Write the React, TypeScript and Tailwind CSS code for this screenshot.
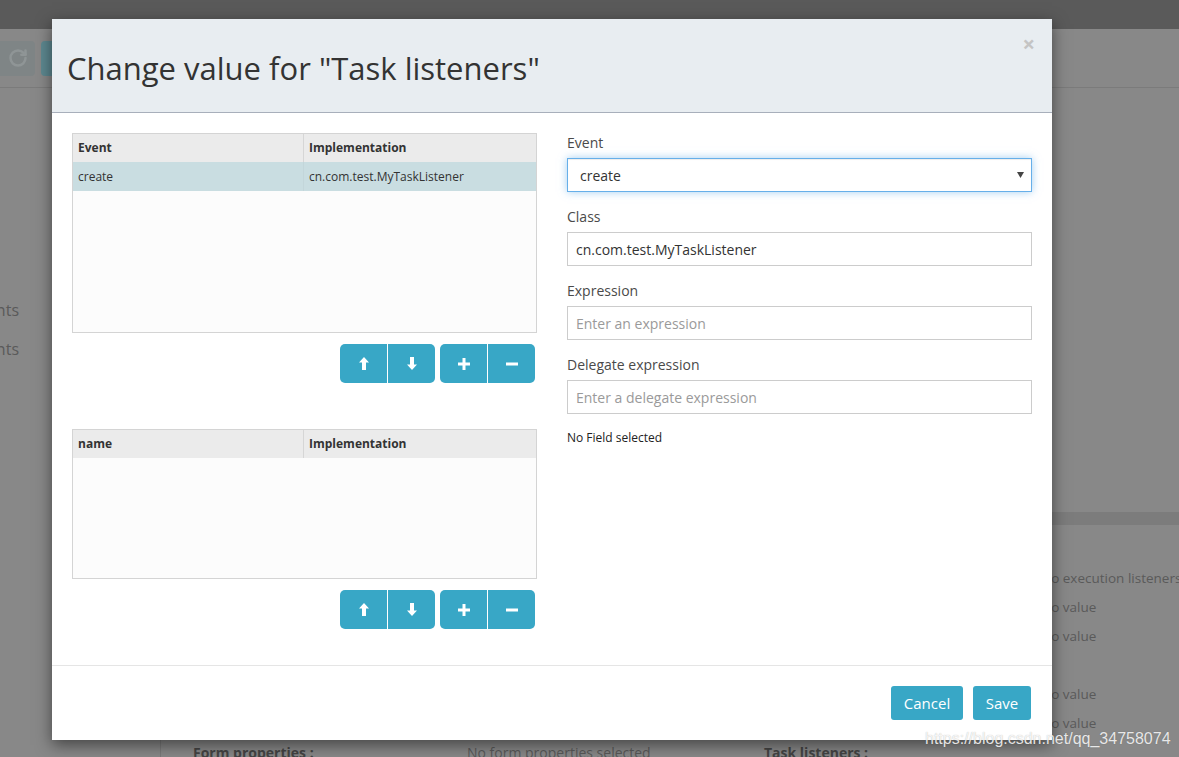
import { RotateCw } from "lucide-react";

function ArrowIcon({ dir }: { dir: "up" | "down" }) {
  return (
    <svg width="10" height="13" viewBox="0 0 10 13" className={dir === "down" ? "rotate-180" : ""}>
      <path d="M5 0 L10 5.5 H7 V13 H3 V5.5 H0 Z" fill="white" />
    </svg>
  );
}

function PlusIcon() {
  return (
    <svg width="12" height="12" viewBox="0 0 12 12">
      <path d="M4.5 0 H7.5 V4.5 H12 V7.5 H7.5 V12 H4.5 V7.5 H0 V4.5 H4.5 Z" fill="white" />
    </svg>
  );
}

function MinusIcon() {
  return (
    <svg width="12" height="4" viewBox="0 0 12 4">
      <rect x="0" y="0.5" width="12" height="3" fill="white" />
    </svg>
  );
}

function ButtonBar() {
  const btn = "w-[47px] h-[39px] bg-[#38a7c6] flex items-center justify-center";
  return (
    <div className="flex justify-end gap-[5px] pr-[2px]">
      <div className="flex rounded-[5px] overflow-hidden">
        <div className={btn}>
          <ArrowIcon dir="up" />
        </div>
        <div className={btn + " border-l border-white w-[48px]"}>
          <ArrowIcon dir="down" />
        </div>
      </div>
      <div className="flex rounded-[5px] overflow-hidden">
        <div className={btn}>
          <PlusIcon />
        </div>
        <div className={btn + " border-l border-white w-[48px]"}>
          <MinusIcon />
        </div>
      </div>
    </div>
  );
}

function Grid({
  cols,
  rows,
  height,
}: {
  cols: [string, string];
  rows: [string, string][];
  height: string;
}) {
  return (
    <div className={"border border-[#d4d4d4] bg-[#fcfcfc] text-[12px] text-[#333] " + height}>
      <div className="flex h-[28px] bg-[#ebebeb] font-bold">
        <div className="w-[231px] border-r border-[#d6d6d6] pl-[5px] flex items-center">{cols[0]}</div>
        <div className="flex-1 pl-[5px] flex items-center">{cols[1]}</div>
      </div>
      {rows.map((r, i) => (
        <div key={i} className="flex h-[29px] bg-[#c9dde1]">
          <div className="w-[231px] border-r border-[#c3d6da] pl-[5px] flex items-center">{r[0]}</div>
          <div className="flex-1 pl-[5px] flex items-center">{r[1]}</div>
        </div>
      ))}
    </div>
  );
}

function Field({ label, children }: { label: string; children: React.ReactNode }) {
  return (
    <div className="mb-[15px]">
      <div className="h-[20px] leading-[20px] mb-[5px] text-[14px] text-[#4a4a4a]">{label}</div>
      {children}
    </div>
  );
}

function TextInput({ value, placeholder }: { value?: string; placeholder?: string }) {
  return (
    <div className="h-[34px] border border-[#cccccc] pl-[8px] flex items-center text-[14px]">
      {value ? (
        <span className="text-[#333]">{value}</span>
      ) : (
        <span className="text-[#9a9a9a]">{placeholder}</span>
      )}
    </div>
  );
}

export default function App() {
  const props: [string, string, string, string][] = [
    ["Assignments :", "No assignment selected", "Execution listeners :", "No execution listeners"],
    ["Due date :", "No value", "Priority :", "No value"],
    ["Category :", "No value", "Skip expression :", "No value"],
    ["Multi instance type :", "None", "Collection :", ""],
    ["Element variable :", "No value", "Completion condition :", "No value"],
    ["Sequential :", "false", "Asynchronous :", "No value"],
    ["Form properties :", "No form properties selected", "Task listeners :", ""],
  ];

  return (
    <div className="relative w-[1179px] h-[757px] overflow-hidden bg-[#888888] font-['Open_Sans',sans-serif]">
      {/* page behind the dialog */}
      <div className="h-[29px] bg-[#5a5a5a]" />
      <div className="h-[59px] border-b border-[#7b7b7b] flex items-center gap-[6px]">
        <div className="ml-[-6px] w-[41px] h-[35px] rounded-[4px] bg-[#7f8586] flex items-center justify-end pr-[7px]">
          <RotateCw size={20} strokeWidth={3} color="#8f9596" />
        </div>
        <div className="w-[40px] h-[35px] rounded-[4px] bg-[#5d8890]" />
      </div>
      <div className="flex h-[424px]">
        <div className="w-[160px] pt-[210px] text-[16px] text-[#5a5a5a]">
          <div className="ml-[-30px] h-[39px]">Events</div>
          <div className="ml-[-30px] h-[39px]">Events</div>
        </div>
      </div>
      <div className="ml-[160px] border-l border-[#7a7a7a] h-[245px]">
        <div className="h-[13px] bg-[#7c7c7c]" />
        <div className="pt-[43px] grid grid-cols-[32px_274px_297px_277px_1fr] text-[14px] text-[#5a5a5a]">
          {props.map((p, i) => (
            <div key={i} className="contents">
              <div className="h-[29px]" />
              <div className="h-[29px] font-bold text-[#444]">{p[0]}</div>
              <div className="h-[29px]">{p[1]}</div>
              <div className="h-[29px] font-bold text-[#444]">{p[2]}</div>
              <div className="h-[29px] whitespace-nowrap text-[13.5px]">{p[3]}</div>
            </div>
          ))}
        </div>
      </div>

      {/* modal */}
      <div className="absolute left-[52px] top-[19px] w-[1000px] bg-white shadow-[0_5px_15px_rgba(0,0,0,0.5)]">
        <div className="relative h-[94px] bg-[#e8edf1] border-b border-[#a8afbb] pl-[15px] pt-[6px] flex items-center">
          <h4 className="text-[31px] leading-[1.1] text-[#333]">Change value for "Task listeners"</h4>
          <div className="absolute right-[17px] top-[13px] text-[22px] leading-none font-bold text-[#c4c4c4]">×</div>
        </div>

        <div className="flex gap-[30px] px-[20px] pt-[20px] h-[552px]">
          <div className="w-[465px]">
            <Grid
              cols={["Event", "Implementation"]}
              rows={[["create", "cn.com.test.MyTaskListener"]]}
              height="h-[200px]"
            />
            <div className="mt-[11px]">
              <ButtonBar />
            </div>
            <div className="mt-[46px]">
              <Grid cols={["name", "Implementation"]} rows={[]} height="h-[150px]" />
            </div>
            <div className="mt-[11px]">
              <ButtonBar />
            </div>
          </div>

          <div className="w-[465px]">
            <Field label="Event">
              <div className="relative h-[34px] border border-[#66afe9] shadow-[inset_0_1px_1px_rgba(0,0,0,0.075),0_0_8px_rgba(102,175,233,0.6)] pl-[12px] flex items-center text-[14px] text-[#333]">
                create
                <svg width="7" height="6" viewBox="0 0 7 6" className="absolute right-[7px] top-[13px]">
                  <path d="M0 0 H7 L3.5 6 Z" fill="#444" />
                </svg>
              </div>
            </Field>
            <Field label="Class">
              <TextInput value="cn.com.test.MyTaskListener" />
            </Field>
            <Field label="Expression">
              <TextInput placeholder="Enter an expression" />
            </Field>
            <Field label="Delegate expression">
              <TextInput placeholder="Enter a delegate expression" />
            </Field>
            <div className="text-[12px] text-[#222] leading-[16px] pt-[1px]">No Field selected</div>
          </div>
        </div>

        <div className="h-[75px] border-t border-[#e5e5e5] flex items-center justify-end gap-[10px] pr-[21px]">
          <div className="w-[72px] h-[34px] rounded-[3px] bg-[#38a7c6] text-white text-[15px] flex items-center justify-center">
            Cancel
          </div>
          <div className="w-[58px] h-[34px] rounded-[3px] bg-[#38a7c6] text-white text-[15px] flex items-center justify-center">
            Save
          </div>
        </div>
      </div>

      <div className="absolute left-[925px] top-[727px] text-[16px] text-white/85 font-['Liberation_Sans',Arial,sans-serif] [text-shadow:0_0_1px_rgba(0,0,0,0.3)]">
        https://blog.csdn.net/qq_34758074
      </div>
    </div>
  );
}
